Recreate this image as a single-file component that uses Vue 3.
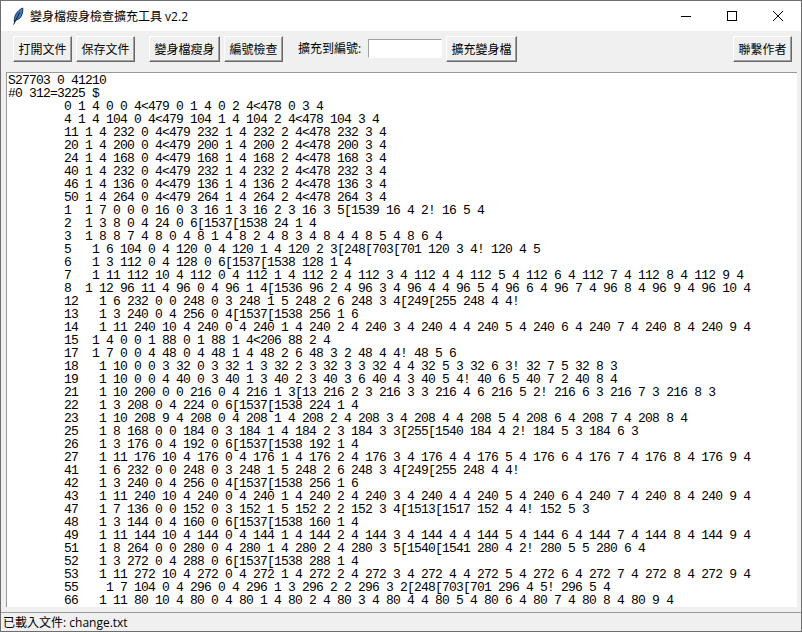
<script setup>
const rows = [
  'S27703 0 41210',
  '#0 312=3225 $',
  '\t0 1 4 0 0 4<479 0 1 4 0 2 4<478 0 3 4',
  '\t4 1 4 104 0 4<479 104 1 4 104 2 4<478 104 3 4',
  '\t11 1 4 232 0 4<479 232 1 4 232 2 4<478 232 3 4',
  '\t20 1 4 200 0 4<479 200 1 4 200 2 4<478 200 3 4',
  '\t24 1 4 168 0 4<479 168 1 4 168 2 4<478 168 3 4',
  '\t40 1 4 232 0 4<479 232 1 4 232 2 4<478 232 3 4',
  '\t46 1 4 136 0 4<479 136 1 4 136 2 4<478 136 3 4',
  '\t50 1 4 264 0 4<479 264 1 4 264 2 4<478 264 3 4',
  '\t1  1 7 0 0 0 16 0 3 16 1 3 16 2 3 16 3 5[1539 16 4 2! 16 5 4',
  '\t2  1 3 8 0 4 24 0 6[1537[1538 24 1 4',
  '\t3  1 8 8 7 4 8 0 4 8 1 4 8 2 4 8 3 4 8 4 4 8 5 4 8 6 4',
  '\t5   1 6 104 0 4 120 0 4 120 1 4 120 2 3[248[703[701 120 3 4! 120 4 5',
  '\t6   1 3 112 0 4 128 0 6[1537[1538 128 1 4',
  '\t7   1 11 112 10 4 112 0 4 112 1 4 112 2 4 112 3 4 112 4 4 112 5 4 112 6 4 112 7 4 112 8 4 112 9 4',
  '\t8  1 12 96 11 4 96 0 4 96 1 4[1536 96 2 4 96 3 4 96 4 4 96 5 4 96 6 4 96 7 4 96 8 4 96 9 4 96 10 4',
  '\t12   1 6 232 0 0 248 0 3 248 1 5 248 2 6 248 3 4[249[255 248 4 4!',
  '\t13   1 3 240 0 4 256 0 4[1537[1538 256 1 6',
  '\t14   1 11 240 10 4 240 0 4 240 1 4 240 2 4 240 3 4 240 4 4 240 5 4 240 6 4 240 7 4 240 8 4 240 9 4',
  '\t15  1 4 0 0 1 88 0 1 88 1 4<206 88 2 4',
  '\t17  1 7 0 0 4 48 0 4 48 1 4 48 2 6 48 3 2 48 4 4! 48 5 6',
  '\t18   1 10 0 0 3 32 0 3 32 1 3 32 2 3 32 3 3 32 4 4 32 5 3 32 6 3! 32 7 5 32 8 3',
  '\t19   1 10 0 0 4 40 0 3 40 1 3 40 2 3 40 3 6 40 4 3 40 5 4! 40 6 5 40 7 2 40 8 4',
  '\t21   1 10 200 0 0 216 0 4 216 1 3[13 216 2 3 216 3 3 216 4 6 216 5 2! 216 6 3 216 7 3 216 8 3',
  '\t22   1 3 208 0 4 224 0 6[1537[1538 224 1 4',
  '\t23   1 10 208 9 4 208 0 4 208 1 4 208 2 4 208 3 4 208 4 4 208 5 4 208 6 4 208 7 4 208 8 4',
  '\t25   1 8 168 0 0 184 0 3 184 1 4 184 2 3 184 3 3[255[1540 184 4 2! 184 5 3 184 6 3',
  '\t26   1 3 176 0 4 192 0 6[1537[1538 192 1 4',
  '\t27   1 11 176 10 4 176 0 4 176 1 4 176 2 4 176 3 4 176 4 4 176 5 4 176 6 4 176 7 4 176 8 4 176 9 4',
  '\t41   1 6 232 0 0 248 0 3 248 1 5 248 2 6 248 3 4[249[255 248 4 4!',
  '\t42   1 3 240 0 4 256 0 4[1537[1538 256 1 6',
  '\t43   1 11 240 10 4 240 0 4 240 1 4 240 2 4 240 3 4 240 4 4 240 5 4 240 6 4 240 7 4 240 8 4 240 9 4',
  '\t47   1 7 136 0 0 152 0 3 152 1 5 152 2 2 152 3 4[1513[1517 152 4 4! 152 5 3',
  '\t48   1 3 144 0 4 160 0 6[1537[1538 160 1 4',
  '\t49   1 11 144 10 4 144 0 4 144 1 4 144 2 4 144 3 4 144 4 4 144 5 4 144 6 4 144 7 4 144 8 4 144 9 4',
  '\t51   1 8 264 0 0 280 0 4 280 1 4 280 2 4 280 3 5[1540[1541 280 4 2! 280 5 5 280 6 4',
  '\t52   1 3 272 0 4 288 0 6[1537[1538 288 1 4',
  '\t53   1 11 272 10 4 272 0 4 272 1 4 272 2 4 272 3 4 272 4 4 272 5 4 272 6 4 272 7 4 272 8 4 272 9 4',
  '\t55    1 7 104 0 4 296 0 4 296 1 3 296 2 2 296 3 2[248[703[701 296 4 5! 296 5 4',
  '\t66   1 11 80 10 4 80 0 4 80 1 4 80 2 4 80 3 4 80 4 4 80 5 4 80 6 4 80 7 4 80 8 4 80 9 4',
]
const content = rows.join('\n')
</script>

<template>
  <div class="window">
    <header class="titlebar">
      <svg class="app-icon" width="12" height="18" viewBox="0 0 12 18">
        <path d="M2.4 15 C1.8 10 4 4 10.8 1 C11.2 5 9.8 10 6.8 12 L4 13.2 Z" fill="#3d7cc0" stroke="#14263f" stroke-width="0.9"/>
        <path d="M1.6 17.5 L7.6 5.5" stroke="#0b1a30" stroke-width="1" fill="none"/>
      </svg>
      <span class="title">變身檔瘦身檢查擴充工具 v2.2</span>
      <div class="controls">
        <span class="ctl">
          <svg width="12" height="12" viewBox="0 0 12 12"><path d="M1 6.5H11" stroke="#000" fill="none"/></svg>
        </span>
        <span class="ctl">
          <svg width="12" height="12" viewBox="0 0 12 12"><rect x="1.5" y="1.5" width="9" height="9" stroke="#000" fill="none"/></svg>
        </span>
        <span class="ctl">
          <svg width="12" height="12" viewBox="0 0 12 12"><path d="M1 1L11 11M11 1L1 11" stroke="#000" stroke-width="1" fill="none"/></svg>
        </span>
      </div>
    </header>

    <div class="toolbar">
      <div class="group">
        <button class="btn b59">打開文件</button>
        <button class="btn b59">保存文件</button>
      </div>
      <div class="group">
        <button class="btn b71">變身檔瘦身</button>
        <button class="btn b59">編號檢查</button>
      </div>
      <label class="fill-label">擴充到編號:</label>
      <input class="fill-input" type="text" />
      <button class="btn b71">擴充變身檔</button>
      <button class="btn b59 contact">聯繫作者</button>
    </div>

    <pre class="editor">{{ content }}</pre>

    <footer class="status">已載入文件: change.txt</footer>
  </div>
</template>

<style>
html, body { margin: 0; padding: 0; background: #f0f0f0; }
</style>

<style scoped>
.window {
  width: 802px;
  height: 632px;
  box-sizing: border-box;
  border: 1px solid #6e6e6e;
  display: flex;
  flex-direction: column;
  background: #f0f0f0;
  overflow: hidden;
  font-family: "Open Sans", "Noto Sans CJK TC", sans-serif;
  font-size: 12px;
  color: #000;
}
.titlebar {
  height: 30px;
  flex: none;
  background: #fff;
  display: flex;
  align-items: center;
  padding-left: 11px;
}
.app-icon { flex: none; }
.title { margin-left: 6px; font-size: 12px; white-space: pre; }
.controls { margin-left: auto; display: flex; }
.ctl {
  width: 46px;
  height: 30px;
  display: flex;
  align-items: center;
  justify-content: center;
}
.toolbar {
  height: 41px;
  flex: none;
  box-sizing: border-box;
  display: flex;
  align-items: flex-start;
  padding: 5px 9px 0 12px;
}
.group { display: flex; gap: 4px; margin-right: 14px; }
.btn {
  height: 26px;
  box-sizing: border-box;
  padding: 0;
  background: #f0f0f0;
  border: 1px solid;
  border-color: #fff #696969 #696969 #fff;
  box-shadow: inset -1px -1px 0 #a0a0a0;
  font: inherit;
  color: #000;
}
.b59 { width: 59px; }
.b71 { width: 71px; }
.fill-label { margin-left: 1px; line-height: 26px; width: 70px; white-space: pre; }
.fill-input {
  width: 74px;
  height: 19px;
  box-sizing: border-box;
  margin: 3px 4px 0 0;
  padding: 0;
  background: #fff;
  border: 1px solid;
  border-color: #a0a0a0 #fff #fff #a0a0a0;
  outline: none;
}
.contact { margin-left: auto; }
.editor {
  flex: 1;
  min-height: 0;
  margin: 0 4px 0 5px;
  padding: 1px 0 0 1px;
  background: #fff;
  border-top: 1px solid #9a9a9a;
  border-left: 1px solid #9a9a9a;
  overflow: hidden;
  font-family: "Liberation Mono", monospace;
  font-size: 13px;
  letter-spacing: -0.8px;
  line-height: 13px;
  tab-size: 8;
  white-space: pre;
}
.status {
  flex: none;
  box-sizing: border-box;
  margin-top: 5px;
  height: 19px;
  border-top: 1px solid #9a9a9a;
  padding-left: 2px;
  line-height: 19px;
}
</style>
